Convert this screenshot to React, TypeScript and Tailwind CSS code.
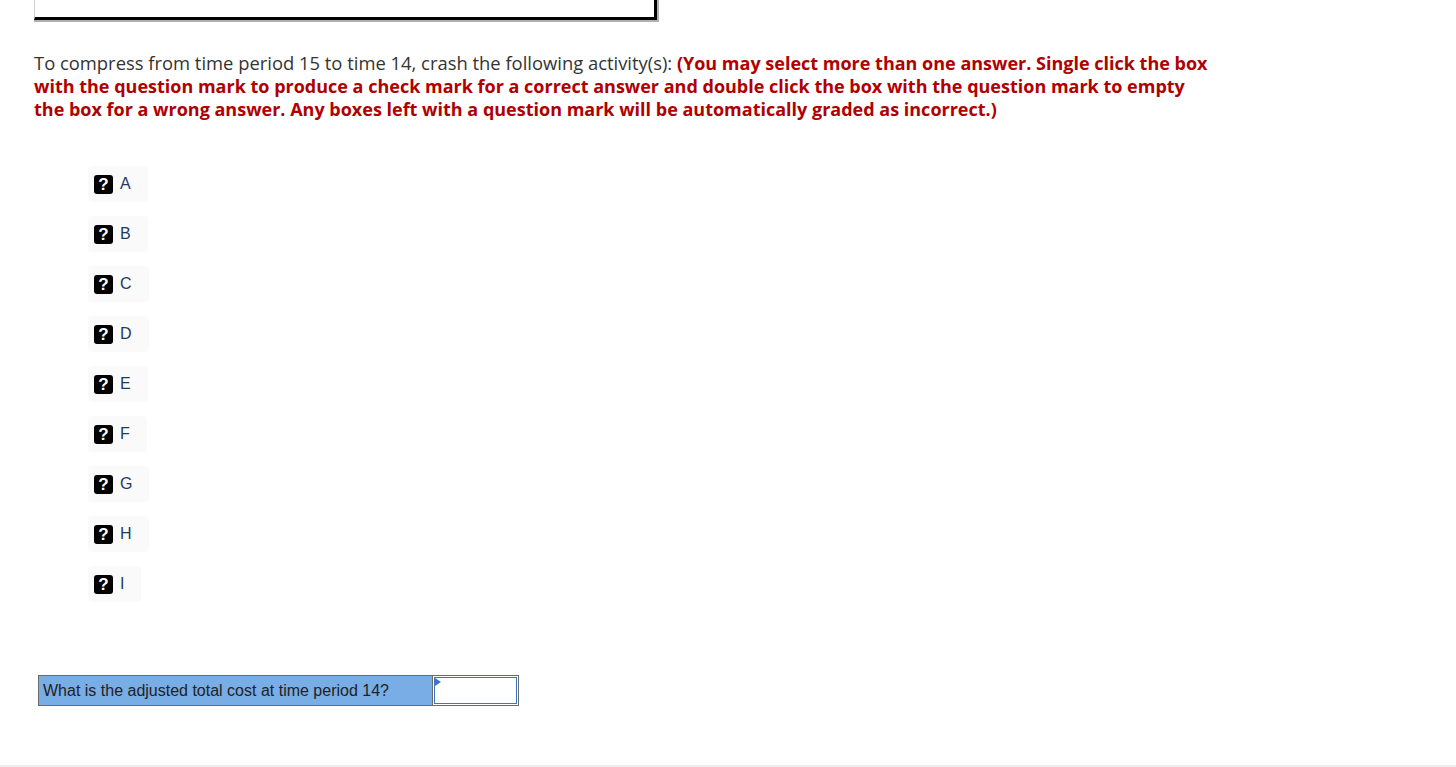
import React from 'react';

const options = ['A', 'B', 'C', 'D', 'E', 'F', 'G', 'H', 'I'];

function QuestionBox() {
  return (
    <span className="flex h-[19px] w-[19px] items-center justify-center rounded-[3px] bg-black text-[17px] font-bold leading-none text-white [font-family:'Liberation_Sans',Arial,sans-serif]">
      ?
    </span>
  );
}

export default function App() {
  return (
    <div className="relative h-[767px] w-[1456px] overflow-hidden bg-white">
      {/* bottom edge of the figure above */}
      <div className="ml-[34px] h-[22px] w-[625px] border-b-2 border-r-2 border-b-[#b0b0b0] border-r-[#b0b0b0]">
        <div className="h-[20px] w-[623px] border-b-[3px] border-l border-r-[3px] border-b-black border-l-[#cfcfcf] border-r-black bg-white" />
      </div>

      <p className="mt-[29px] ml-[34px] w-[1250px] text-[18px] leading-[23px] text-[#333] [font-family:'Open_Sans',Lato,sans-serif]">
        <span className="text-[18.4px] leading-[23px]">
          To compress from time period 15 to time 14, crash the following activity(s):
        </span>{' '}
        <strong className="font-bold leading-[23px] text-[#b00000]">
          (You may select more than one answer. Single click the box
          <br />
          with the question mark to produce a check mark for a correct answer and double click the box with the
          question mark to empty
          <br />
          the box for a wrong answer. Any boxes left with a question mark will be automatically graded as incorrect.)
        </strong>
      </p>

      <div className="mt-[45px] ml-[88px] flex flex-col gap-[14px]">
        {options.map((o) => (
          <div
            key={o}
            className="flex h-[36px] items-center gap-[7px] self-start rounded-[4px] bg-[#fafafa] pl-[6px] pr-[17px]"
          >
            <QuestionBox />
            <span className="text-[16px] text-[#1f3a5f] [font-family:'Liberation_Sans',Arial,sans-serif]">{o}</span>
          </div>
        ))}
      </div>

      <div className="mt-[73px] ml-[38px] flex h-[31px] w-[481px] border border-[#6b6b6b] [font-family:'Liberation_Sans',Arial,sans-serif]">
        <div className="flex w-[394px] items-center border-r border-[#6b6b6b] bg-[#79ade6] pl-[4px] text-[16px] text-[#222]">
          What is the adjusted total cost at time period 14?
        </div>
        <div className="flex flex-1 items-center bg-white p-[1px]">
          <div className="relative h-[27px] w-full border border-[#3b76c4] bg-white">
            <span className="absolute left-0 top-0 h-0 w-0 border-y-[4px] border-l-[6px] border-y-transparent border-l-[#3b76c4]" />
          </div>
        </div>
      </div>

      <div className="absolute bottom-0 left-0 h-[2px] w-full bg-[#eeeeee]" />
    </div>
  );
}
